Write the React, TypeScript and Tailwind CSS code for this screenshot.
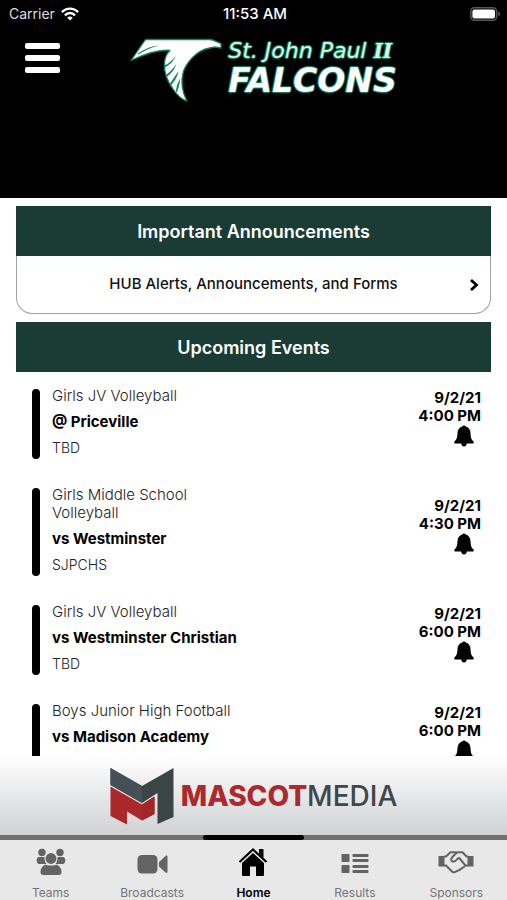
import React from "react";

type GameEvent = {
  team: string;
  opponent: string;
  place: string;
  date: string;
  time: string;
};

const events: GameEvent[] = [
  { team: "Girls JV Volleyball", opponent: "@ Priceville", place: "TBD", date: "9/2/21", time: "4:00 PM" },
  { team: "Girls Middle School Volleyball", opponent: "vs Westminster", place: "SJPCHS", date: "9/2/21", time: "4:30 PM" },
  { team: "Girls JV Volleyball", opponent: "vs Westminster Christian", place: "TBD", date: "9/2/21", time: "6:00 PM" },
  { team: "Boys Junior High Football", opponent: "vs Madison Academy", place: "TBD", date: "9/2/21", time: "6:00 PM" },
];

function StatusBar() {
  return (
    <div className="grid h-7 grid-cols-3 items-center pr-[6px] pl-[9px] text-sm text-white">
      <div className="flex items-center gap-[6px] text-[#dedede]">
        <span>Carrier</span>
        <svg width="18" height="14" viewBox="0 0 18 14" fill="none" stroke="white" strokeWidth="2.4" aria-hidden="true">
          <path d="M0.9 5.2C5.5 0.4 12.5 0.4 17.1 5.2" />
          <path d="M3.9 8.3C6.8 5.3 11.2 5.3 14.1 8.3" />
          <path d="M9 13.6L6.2 10.7C7.8 9.2 10.2 9.2 11.8 10.7Z" fill="white" stroke="none" />
        </svg>
      </div>
      <div className="text-center text-[15px] font-medium whitespace-nowrap">11:53 AM</div>
      <svg className="justify-self-end" width="31" height="14" viewBox="0 0 31 14" aria-hidden="true">
        <rect x="0.8" y="0.8" width="25.8" height="12.4" rx="3.6" fill="none" stroke="#58585a" strokeWidth="1.5" />
        <rect x="2.4" y="2.4" width="22.6" height="9.2" rx="2" fill="white" />
        <path d="M28.2 4.6C30.6 5.2 30.6 8.8 28.2 9.4Z" fill="#58585a" />
      </svg>
    </div>
  );
}

function FalconMark() {
  return (
    <svg width="94" height="66" viewBox="0 0 94 66" aria-hidden="true">
      <path
        d="M1 23.5L15.5 2.5H80C84 2.5 86 5 91 6.5V11L85 10C77 11 71 13.5 67 16.5C60 22 56 28 53.500 34C51 43 51 53 57 64C53 63 47 58 43 52C37 44 34 35 34.500 26C35 20 37 16 40 13.500C32 12.500 18 15.500 1 23.5Z"
        fill="white"
        stroke="#128260"
        strokeWidth="1.300"
        strokeLinejoin="round"
      />
      <g fill="#128260">
        <path d="M8 16.500C15 11.500 22 9 29 8.500C22 10.500 15 13 8.500 17.500Z" />
        <path d="M34.500 28.500C39 26.500 43 23 45.500 18.500C44 24 40 28 34.500 30.500Z" />
        <path d="M36 38C40 35 44 31 46.500 26.500C45 32 41 37 36.500 40Z" />
        <path d="M40 46.500C43 42 46 38 48.500 34C47.500 40 44 45 41 48.500Z" />
        <path d="M46 54.500C46 50 48 45 50 41.500C50 47 48 52 47 55.500Z" />
      </g>
    </svg>
  );
}

function Header() {
  return (
    <header className="h-[198px] shrink-0 bg-black">
      <StatusBar />
      <div className="flex items-start">
        <button type="button" aria-label="Open menu" className="mt-[15px] ml-[25px] flex w-[35px] shrink-0 flex-col gap-[6px]">
          <span className="h-[6px] w-full rounded-xs bg-white" />
          <span className="h-[6px] w-full rounded-xs bg-white" />
          <span className="h-[6px] w-full rounded-xs bg-white" />
        </button>
        <div className="flex grow justify-center gap-1 pt-[9px] pr-10">
          <FalconMark />
          <div className="font-['DejaVu_Sans'] whitespace-nowrap text-white italic [text-shadow:0_0_2px_#128260,1px_0_1px_#128260,-1px_0_1px_#128260,0_1px_1px_#128260,0_-1px_1px_#128260]">
            <p className="text-[22px] leading-[26px] text-[#d5f5e8]">
              St. John Paul <span className="font-['DejaVu_Serif'] text-xl font-bold">II</span>
            </p>
            <p className="text-[33px] leading-[32px] font-bold">FALCONS</p>
          </div>
        </div>
      </div>
    </header>
  );
}

function SectionTitle({ children }: { children: React.ReactNode }) {
  return (
    <h2 className="flex h-[50px] items-center justify-center bg-[#1a3c34] pt-[2px] text-lg font-semibold text-white">
      {children}
    </h2>
  );
}

function BellIcon() {
  return (
    <svg width="20" height="22" viewBox="0 0 20 22" fill="currentColor" aria-hidden="true">
      <path d="M8.600 1.200C8.800 0.200 11.200 0.200 11.400 1.200C14.600 2 16.300 4.500 16.500 8C16.700 12.500 17.300 14.500 19.200 16.200C20.200 17.200 19.800 18.400 18.600 18.400H12.800C12.600 20.400 11.500 21.400 10 21.400S7.400 20.400 7.200 18.400H1.400C0.200 18.400 -0.200 17.200 0.800 16.200C2.700 14.500 3.300 12.500 3.500 8C3.700 4.500 5.400 2 8.600 1.200Z" />
    </svg>
  );
}

function EventRow({ event }: { event: GameEvent }) {
  return (
    <li className="flex items-center pt-[11px] pr-[10px] pb-[18px] pl-4">
      <span className="mt-[2px] -mb-[2px] w-2 self-stretch rounded-full bg-black" />
      <div className="ml-3 flex grow flex-col gap-2 text-[15px] leading-[18px]">
        <p className="w-[200px] font-light text-[#222]">{event.team}</p>
        <p className="font-bold">{event.opponent}</p>
        <p className="text-sm leading-[18px] font-light text-[#222]">{event.place}</p>
      </div>
      <div className="-mt-2 flex flex-col text-right text-[15px] leading-[18px] font-bold">
        <span>{event.date}</span>
        <span>{event.time}</span>
        <button type="button" aria-label={`Remind me of ${event.opponent}`} className="mr-[7px] self-end">
          <BellIcon />
        </button>
      </div>
    </li>
  );
}

function SponsorBanner() {
  return (
    <a
      href="#sponsor"
      className="flex h-[79px] shrink-0 items-center justify-center gap-[7px] bg-linear-to-b from-white to-[#cfd1d3] whitespace-nowrap"
    >
      <svg width="64" height="58" viewBox="0 0 64 58" aria-hidden="true">
        <path d="M0.500 1L32 19L63.500 1V50L47.500 57V26L32 36L0.500 18Z" fill="#3c4546" />
        <path d="M0.500 1L32 19V36L0.500 18Z" fill="#474f56" />
        <path d="M0.500 19.500L32 37.500L44.500 29.500V47L32 53.500L17 44.500V57.500L0.500 49Z" fill="#ab282a" />
        <path d="M32 37.500L44.500 29.500V47L32 53.500Z" fill="#a02628" />
      </svg>
      <span className="text-[28px] leading-8 text-[#3f474a]">
        <span className="font-extrabold text-[#ab2a2d]">MASCOT</span>
        <span className="font-medium">MEDIA</span>
      </span>
    </a>
  );
}

function TeamsIcon() {
  return (
    <svg width="30" height="28" viewBox="0 0 30 28" fill="currentColor" aria-hidden="true">
      <circle cx="6" cy="4.500" r="3.700" />
      <circle cx="24" cy="4.500" r="3.700" />
      <path d="M2.500 9H8.500C8.500 12 9 14 10.500 16H2.500C0 14 0 10.500 2.500 9Z" />
      <path d="M27.500 9H21.500C21.500 12 21 14 19.500 16H27.500C30 14 30 10.500 27.500 9Z" />
      <circle cx="15" cy="10.500" r="5.400" />
      <path d="M8.500 17C10 16 11 17.500 15 17.500S20 16 21.500 17C24 18.500 25.500 21 25.500 24C25.500 26 24.500 27 22.500 27H7.500C5.500 27 4.500 26 4.500 24C4.500 21 6 18.500 8.500 17Z" />
    </svg>
  );
}

function CameraIcon() {
  return (
    <svg width="31" height="28" viewBox="0 0 31 28" fill="currentColor" aria-hidden="true">
      <rect x="0.500" y="7" width="20" height="18.500" rx="4.500" />
      <path d="M22 14L28.500 8C29.500 7.300 30.500 7.500 30.500 9V23.500C30.500 25 29.500 25.200 28.500 24.500L22 18.500Z" />
    </svg>
  );
}

function HomeIcon() {
  return (
    <svg width="30" height="28" viewBox="0 0 30 28" fill="currentColor" aria-hidden="true">
      <path d="M1.500 14L15 1.500L28.500 14" fill="none" stroke="currentColor" strokeWidth="2.200" />
      <path d="M21 1H25.500V10L21 6Z" />
      <path d="M15 5L26 15V26.500C26 27.500 25.500 28 24.500 28H18V18.500H12V28H5.500C4.500 28 4 27.500 4 26.500V15Z" />
    </svg>
  );
}

function ResultsIcon() {
  return (
    <svg width="28" height="28" viewBox="0 0 28 28" fill="currentColor" aria-hidden="true">
      <rect x="0.500" y="6" width="8" height="8" rx="0.800" />
      <rect x="0.500" y="17" width="8" height="8" rx="0.800" />
      <rect x="11.500" y="6" width="16" height="3" rx="0.800" />
      <rect x="11.500" y="11" width="16" height="3" rx="0.800" />
      <rect x="11.500" y="17" width="16" height="3" rx="0.800" />
      <rect x="11.500" y="22" width="16" height="3" rx="0.800" />
    </svg>
  );
}

function HandshakeIcon() {
  return (
    <svg width="36" height="24" viewBox="0 0 36 24" fill="none" stroke="currentColor" strokeWidth="2" strokeLinejoin="round" strokeLinecap="round" aria-hidden="true">
      <path d="M0.500 6H6.500V16.500H0.500Z" fill="currentColor" stroke="none" />
      <path d="M29.500 6H35.500V16.500H29.500Z" fill="currentColor" stroke="none" />
      <path d="M6.500 6.500H8L12.500 2.200H17L18.500 2.800L20.500 2.200H24.500L28.500 6.500H29.500" />
      <path d="M6.500 15.500H8L13.500 21C14.500 22.200 16.500 22.500 18 21.500L21.500 19.800L25 17.500L27.800 15.500H29.500" />
      <path d="M18.500 2.800L14 7.500C12.500 9.200 13.200 11 14.700 11.500C16.500 12 17.800 11 19.200 9L21.200 8L27 14.800" />
    </svg>
  );
}

const tabs = [
  { label: "Teams", icon: <TeamsIcon /> },
  { label: "Broadcasts", icon: <CameraIcon /> },
  { label: "Home", icon: <HomeIcon />, active: true },
  { label: "Results", icon: <ResultsIcon /> },
  { label: "Sponsors", icon: <HandshakeIcon /> },
];

function TabBar() {
  return (
    <nav className="grid h-[65px] shrink-0 grid-cols-5 bg-[#e8e8e8]">
      {tabs.map((tab) => (
        <button
          key={tab.label}
          type="button"
          aria-current={tab.active ? "page" : undefined}
          className={`flex flex-col items-center text-[12px] leading-[18px] ${
            tab.active ? "font-semibold text-black" : "text-[#757575]"
          }`}
        >
          <span className="h-[5px] w-full bg-[#707070]">
            {tab.active && <span className="block h-full rounded-full bg-black" />}
          </span>
          <span className={`flex h-11 items-center ${tab.active ? "text-black" : "text-[#636363]"}`}>{tab.icon}</span>
          <span>{tab.label}</span>
        </button>
      ))}
    </nav>
  );
}

export default function App() {
  return (
    <div className="flex h-screen flex-col overflow-hidden bg-white font-[Inter,sans-serif] text-black">
      <Header />
      <main className="min-h-0 grow overflow-hidden px-4 pt-2">
        <section>
          <SectionTitle>Important Announcements</SectionTitle>
          <a
            href="#announcements"
            className="flex h-[58px] items-center rounded-b-2xl border border-t-0 border-[#a0a0a0] pr-[11px] pl-[11px] text-[15px] font-medium"
          >
            <span className="grow pl-[10px] text-center text-[#111]">HUB Alerts, Announcements, and Forms</span>
            <svg width="10" height="14" viewBox="0 0 10 14" fill="none" stroke="black" strokeWidth="2.800" aria-hidden="true">
              <path d="M2 2L7.500 7L2 12" />
            </svg>
          </a>
        </section>
        <section className="mt-2">
          <SectionTitle>Upcoming Events</SectionTitle>
          <ul className="pt-1">
            {events.map((event, index) => (
              <EventRow key={index} event={event} />
            ))}
          </ul>
        </section>
      </main>
      <SponsorBanner />
      <TabBar />
    </div>
  );
}
